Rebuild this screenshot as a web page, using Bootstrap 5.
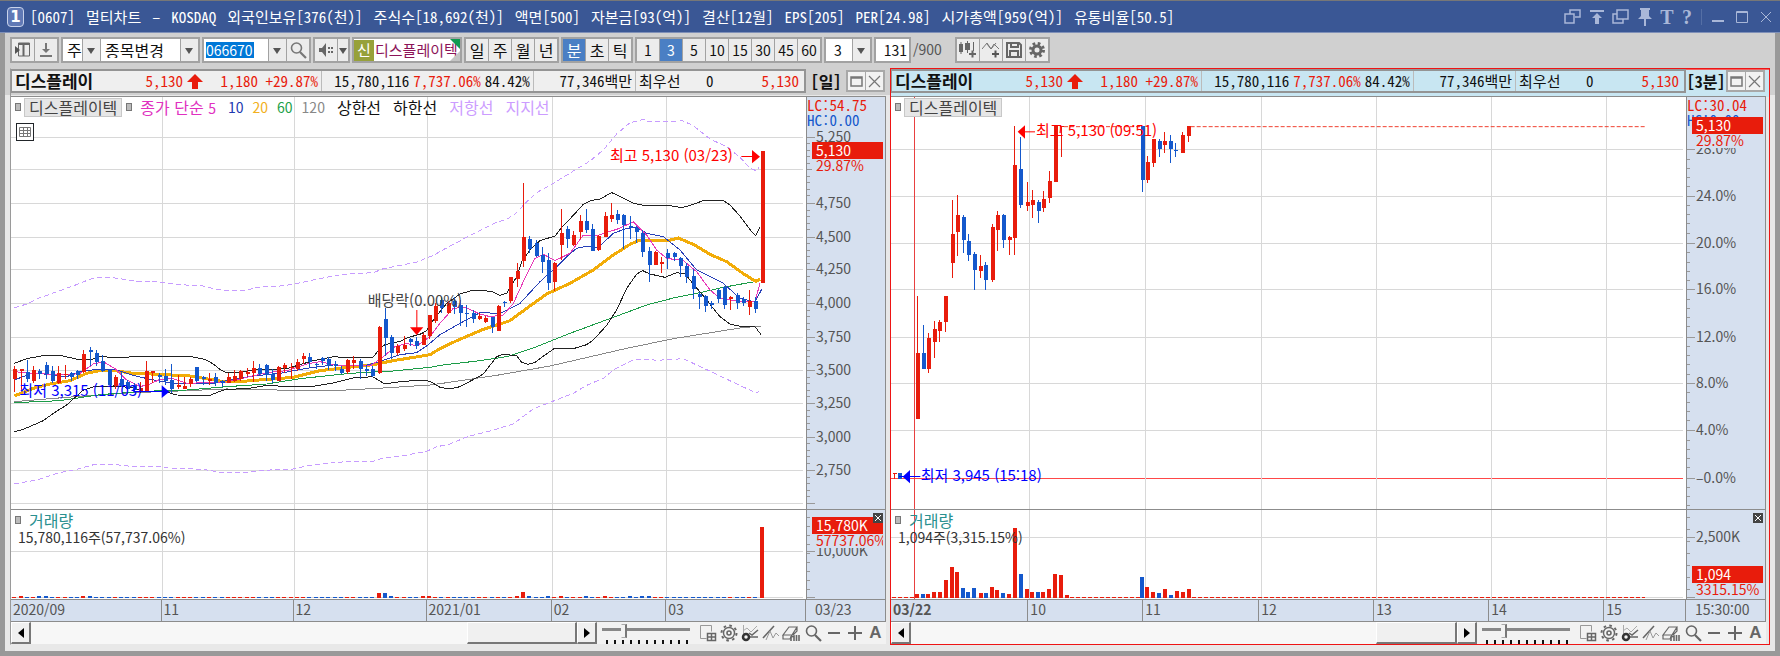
<!DOCTYPE html>
<html lang="ko">
<head>
<meta charset="utf-8">
<meta name="viewport" content="width=device-width, initial-scale=1">
<title>[0607] 멀티차트</title>
<link href="https://cdn.jsdelivr.net/npm/bootstrap@5.3.0/dist/css/bootstrap.min.css" rel="stylesheet">
<style>
:root{--up:#e81c0c;--down:#1458cc;--line:#8c8c8c;--axis:#d6e0ef;--face:#ececec;--axis-w:80px}
body{font-family:"Noto Sans CJK KR",sans-serif;font-size:16px;line-height:16px;color:#111;background:#d0d0d0;overflow:hidden}
button,input,select{font:inherit;color:inherit}
svg{display:block}
.up{color:var(--up)}
.down{color:var(--down)}
.half{font-size:15px;font-feature-settings:"hwid"}
.num{font-size:14px}

/* window frame */
.titlebar{height:33px;background:#3a5795;border-top:1px solid #777;border-bottom:1px solid #7f90b8;color:#fff;padding:0 2px 0 7px}
.win-no{width:17px;height:20px;border:1px solid #c8d2ea;border-radius:4px;background:#6079b5;font:bold 15px/18px "DejaVu Sans",sans-serif;text-align:center;margin-right:6px}
.facts{gap:11px}
.title-tools{color:#a9b7d8}
.title-tools button{background:none;border:0;padding:0;height:22px;width:24px;display:flex;align-items:center;justify-content:center}
.title-tools .glyph{font:bold 20px/20px "Liberation Serif",serif;width:20px}
.frame{border:5px solid #999;border-top:0;border-left-color:#989898}
.workspace{padding:0 5px 6px;background:linear-gradient(#d0d0d0 27px,#e8e8e8 27px)}

/* toolbar */
.tools{height:35px;padding:4px 5px 0;gap:2px}
.tgroup{display:flex;height:26px;border:2px solid #a2a2a2;background:#a2a2a2;gap:1px}
.tbtn{width:22px;border:0;padding:0;background:var(--face);display:flex;align-items:center;justify-content:center}
.tbtn.slim{width:10px;position:relative}
.tbtn.active{background:#4a7fc4;color:#fff}
.pick{position:relative;display:flex;background:#fff}
.pick select,.code{appearance:none;border:0;padding:0 18px 0 4px;width:100%;border-radius:0;background:#fff;outline:0}
.pick::before{content:"";position:absolute;right:0;top:0;bottom:0;width:18px;background:var(--face);border-left:1px solid #a2a2a2;pointer-events:none}
.pick::after,.tri{content:"";position:absolute;right:5px;top:9px;border:4px solid transparent;border-top:6px solid #555;border-bottom:0;pointer-events:none}
.tri{right:1px}
.pick-type{width:37px}.pick-mode{width:97px}.pick-code{width:82px}.pick-n{width:44px}
.pick .code{padding-left:2px;color:#fff;background:linear-gradient(#0078d7,#0078d7) 2px 3px/48px 16px no-repeat #fff}
.stock{width:106px;background:#fff;color:#8c1458;overflow:hidden;position:relative;white-space:nowrap;font-size:15px}
.stock b{background:#97a13a;color:#fff;font-weight:400;flex:none;width:20px;text-align:center;line-height:20px;height:21px;margin-right:1px}
.stock::before{content:"";position:absolute;right:0;top:0;border:5px solid #109a50;border-left-color:transparent;border-bottom-color:transparent}
.stock::after{content:"";position:absolute;right:0;bottom:0;border:5px solid #c4c4c4;border-left-color:transparent;border-top-color:transparent}
.count{width:37px;border:2px solid #a2a2a2;background:#fff;height:26px;padding:0 2px;text-align:right;border-radius:0}
.total{width:40px;color:#555;line-height:24px}

/* chart panels */
.pane{flex:1 1 0;min-width:0;border:1px solid transparent;border-left-color:#9a9a9a;padding-right:3px;display:flex;flex-direction:column}
.pane.current{border-color:#ee1414;box-shadow:inset 0 1px #f06060;background:linear-gradient(#c8e6f2 28px,#e8e8e8 28px)}
.quote{height:24px}
.cells{flex:1 1 auto;display:grid;grid-template-columns:minmax(0,312fr) minmax(0,213fr) minmax(0,103fr) minmax(0,169fr);border:2px solid #949494;border-left-width:1px;background:#efefef;white-space:nowrap}
.current .cells{background:#c8e6f2}
.cells>div{display:flex;align-items:center;border-right:1px solid #bbb;padding:0 3px;min-width:0}
.cells>div:last-child{border:0;padding-right:5px}
.pname{font-weight:700;font-size:17px}
.w-fig{width:60px;text-align:right}
.w-diff{width:55px;text-align:right}
.period{width:40px;font-weight:700;font-size:16px;text-align:center;white-space:nowrap}
.pbtns{display:flex;height:22px;border:2px solid #a8a8a8;background:#a8a8a8;gap:1px;margin-right:1px}
.pbtns button{width:17px;border:0;padding:0;background:#f2f2f2;display:flex;align-items:center;justify-content:center}
.charts{border-top:1px solid var(--line);margin-top:3px}
.band{display:flex;min-height:0;flex-basis:0;background:#fff}
.band.price{flex-grow:412;border-bottom:1px solid var(--line)}
.band.vol{flex-grow:89}
.plot{position:relative;flex:1 1 0;min-width:0;overflow:hidden}
.scale{position:relative;width:var(--axis-w);background:var(--axis);border-left:1px solid var(--line);border-right:1px solid var(--line);overflow:hidden;color:#555}
.fill{position:absolute;inset:0;width:100%;height:100%}
.legend-row{position:relative;display:flex;align-items:center;height:20px;padding-left:4px;white-space:nowrap}
.tag{background:#e6e6e6;border:1px solid #c8c8c8;padding:0 4px;height:19px;line-height:17px;color:#444;margin:0 4px 0 3px}
.sq{width:6px;height:8px;border:1px solid #777;background:#bbb;flex:none}
.avg{margin-left:9px}
.bound{margin-left:12px}
.grid-btn{position:absolute;left:5px;top:26px;width:18px;height:18px}
.note{position:absolute;white-space:nowrap;transform:translateY(-57%);font-size:15px}
.tick-label{position:absolute;left:9px;transform:translateY(-57%);white-space:nowrap;font-size:14px}
.limits{position:relative;background:var(--axis);line-height:15px;height:30px}
.now{position:absolute;left:5px;right:2px;font-size:14px}
.now b{display:block;font-weight:400;height:17px;line-height:16px;padding-left:4px;background:var(--up);color:#fff}
.now span{display:block;background:var(--axis);height:14px;line-height:13px;padding-left:4px;color:var(--up);white-space:nowrap;overflow:hidden}
.vol-text{color:#333;font-size:14px;line-height:14px;padding-left:7px}
.xbtn{position:absolute;right:2px;top:3px;width:10px;height:10px;background:#444;border:0;padding:0;color:#fff;display:flex;align-items:center;justify-content:center}
.dates{display:flex;height:23px;background:var(--axis);border:1px solid var(--line);border-left:0;color:#555;line-height:18px;font-size:14px}
.dates>span{flex-basis:0;min-width:0;padding-left:2px;border-right:1px solid var(--line)}
.dates>.last{flex:0 0 79px;padding-left:9px;border:0}

/* scroll row */
.scroller{height:22px;background:#f2f2f2}
.sbtn{width:20px;flex:none;background:#f0f0f0;border:1px solid #fff;border-right:2px solid #777;border-bottom:2px solid #777;padding:0;display:flex;align-items:center;justify-content:center}
.rail{flex:1 1 0;display:flex;background:#f7f7f7}
.grip{border:1px solid #fff;border-right:2px solid #777;border-bottom:2px solid #777;background:#f0f0f0}
.zoomer{width:88px;margin:0 7px 0 5px;position:relative;display:flex;align-items:flex-start;background:repeating-linear-gradient(90deg,#111 0 2px,transparent 2px 8px) 4px 100%/82px 4px no-repeat}
.zoomer input{appearance:none;width:100%;height:14px;margin:2px 0;background:linear-gradient(#888,#888) 0 4px/100% 3px no-repeat}
.zoomer input::-webkit-slider-thumb{appearance:none;width:6px;height:14px;background:#f2f2f2;border:1px solid #aaa;border-right:2px solid #777;border-left-color:#f2f2f2}
.minis button{width:21px;height:20px;border:0;padding:0;background:none;color:#666;display:flex;align-items:center;justify-content:center}
.minis .ltr{font:bold 17px/18px "Liberation Sans",sans-serif}
</style>
</head>
<body class="vh-100 d-flex flex-column m-0">

<svg width="0" height="0" class="position-absolute" aria-hidden="true">
  <defs>
    <g id="i-gear" fill="none" stroke="currentColor"><circle cx="9" cy="9" r="4" stroke-width="3"/><circle cx="9" cy="9" r="6.5" stroke-width="3" stroke-dasharray="2.6 2.5"/></g>
    <g id="i-gear2" fill="none" stroke="currentColor"><circle cx="9" cy="9" r="5.5" stroke-width="1.4"/><circle cx="9" cy="9" r="7.5" stroke-width="2" stroke-dasharray="2.6 3.3"/><circle cx="9" cy="9" r="2" stroke-width="1.6"/></g>
    <g id="i-lens" fill="none" stroke="currentColor"><circle cx="7.5" cy="7" r="5" stroke-width="1.6"/><path d="M11 11l6 6" stroke-width="2.2"/></g>
    <g id="i-new" fill="none" stroke="currentColor"><path d="M7.500 14.500h-6v-13h11v6" stroke="#999"/><path d="M8.500 9.500h8v7h-8zM12.500 9.500v7M8.500 13h8" stroke-width="1.500"/></g>
    <g id="i-ind" fill="none" stroke="currentColor"><path d="M2.500 1v9M2 7l4-3 4 4 6-6" stroke="#aaa"/><path d="M8 13h9M8 9l3 2 6-5" stroke-width="1.500"/><circle cx="5" cy="13" r="3" stroke="#333" stroke-width="2.500"/></g>
    <g id="i-draw" fill="none" stroke="currentColor"><path d="M1 14L12 2" stroke-width="1.600"/><path d="M4 16l4-9 3 7 3-5 3 3" stroke="#999"/></g>
    <g id="i-erase" fill="none" stroke="currentColor"><path d="M1 11l6-8h8l-5 8zM1 11v4h7l2-4M15 3v4l-4 4" stroke-width="1.200"/><path d="M9 17v-4l3-1v5M14.500 11v6M17 11v6" stroke-width="1.600"/></g>
  </defs>
</svg>

<header class="titlebar d-flex align-items-center flex-shrink-0">
  <span class="win-no">1</span>
  <div class="facts half d-flex text-nowrap flex-grow-1">
    <span>[0607]</span><span>멀티차트</span><span>–</span><span>KOSDAQ</span><span>외국인보유[376(천)]</span><span>주식수[18,692(천)]</span><span>액면[500]</span><span>자본금[93(억)]</span><span>결산[12월]</span><span>EPS[205]</span><span>PER[24.98]</span><span>시가총액[959(억)]</span><span>유통비율[50.5]</span>
  </div>
  <div class="title-tools d-flex align-items-center">
    <button aria-label="창 복제"><svg width="18" height="16" fill="none" stroke="currentColor" stroke-width="1.500"><path d="M6 5V1h10v7h-5M1 5h9v9H1z"/></svg></button>
    <button aria-label="위로"><svg width="16" height="16" fill="currentColor"><path d="M1 1h14v2H1zM8 4l5 5h-3v6H6V9H3z"/></svg></button>
    <button aria-label="겹치기"><svg width="18" height="16" fill="none" stroke="currentColor" stroke-width="1.500"><path d="M5 1h11v9H5zM5 5H1v9h10v-4"/></svg></button>
    <button aria-label="고정"><svg width="14" height="18" fill="currentColor"><path d="M2 0h10v2h-1v6l3 3H0l3-3V2H2zM6 11h2v7H6z"/></svg></button>
    <button class="glyph" aria-label="글꼴">T</button>
    <button class="glyph" aria-label="도움말">?</button>
    <span class="vr mx-1 my-1"></span>
    <button aria-label="최소화"><svg width="14" height="12"><path d="M1 9h12v2H1z" fill="currentColor"/></svg></button>
    <button aria-label="최대화"><svg width="14" height="14" fill="none" stroke="currentColor"><path d="M1.500 1.500h11v11h-11zM1 2.500h12"/></svg></button>
    <button aria-label="닫기"><svg width="12" height="12" stroke="currentColor"><path d="M1 1l10 10M11 1L1 11"/></svg></button>
  </div>
</header>

<main class="frame d-flex flex-column flex-grow-1" style="min-height:0">
  <div class="tools d-flex flex-shrink-0 text-nowrap">
    <div class="tgroup">
      <button class="tbtn" aria-label="목록"><svg width="16" height="18" fill="none" stroke="#666"><path d="M3.500 2v13h11V2z" /><path d="M3 3h12M8.500 3v12" stroke-width="2"/><path d="M0 5l5 4-5 4z" fill="#555" stroke="none"/></svg></button>
      <button class="tbtn" aria-label="내려받기"><svg width="14" height="18" fill="#777"><path d="M6 2h2v6h3l-4 4-4-4h3zM1 14h12v2H1z"/></svg></button>
    </div>
    <div class="tgroup">
      <label class="pick pick-type"><select aria-label="종류"><option>주</option></select></label>
      <label class="pick pick-mode"><select aria-label="변경"><option>종목변경</option></select></label>
    </div>
    <div class="tgroup">
      <label class="pick pick-code"><input class="code num" value="066670" aria-label="종목코드"></label>
      <button class="tbtn" aria-label="검색"><svg width="18" height="18" color="#777"><use href="#i-lens"/></svg></button>
    </div>
    <div class="tgroup">
      <button class="tbtn" aria-label="소리"><svg width="16" height="16" fill="#666"><path d="M1 6h3l4-5v14l-4-5H1zM10 5h2v2h-2zM13 5h2v2h-2zM10 9h2v2h-2zM13 9h2v2h-2z"/></svg></button>
      <button class="tbtn slim" aria-label="소리 설정"><span class="tri"></span></button>
    </div>
    <div class="tgroup"><div class="stock d-flex align-items-center"><b>신</b><span>디스플레이텍</span></div></div>
    <div class="tgroup">
      <button class="tbtn">일</button><button class="tbtn">주</button><button class="tbtn">월</button><button class="tbtn">년</button>
    </div>
    <div class="tgroup">
      <button class="tbtn active">분</button><button class="tbtn">초</button><button class="tbtn">틱</button>
    </div>
    <div class="tgroup num">
      <button class="tbtn">1</button><button class="tbtn active">3</button><button class="tbtn">5</button><button class="tbtn">10</button><button class="tbtn">15</button><button class="tbtn">30</button><button class="tbtn">45</button><button class="tbtn">60</button>
    </div>
    <div class="tgroup num"><label class="pick pick-n"><select class="ps-2" aria-label="간격"><option>3</option></select></label></div>
    <input class="count num" value="131" aria-label="봉 개수"><span class="total num">/900</span>
    <div class="tgroup">
      <button class="tbtn" aria-label="봉 추가"><svg width="18" height="18" fill="#666"><path d="M0 3h4v8H0zM1.500 1h1v12h-1zM6 2h5v7H6zM8 0h1v12H8zM14 1h1v9h-1zM10 12h7v2h-7zM12.500 9.500h2v7h-2z"/></svg></button>
      <button class="tbtn" aria-label="지표 추가"><svg width="18" height="18" fill="none" stroke="#777"><path d="M0 8l5-6 4 6 5-6M5 3l4 5 3-5 5 5" /><path d="M10 13h7M13.500 9.500v7" stroke-width="2" stroke="#555"/></svg></button>
      <button class="tbtn" aria-label="저장"><svg width="18" height="18" fill="none" stroke="#666" stroke-width="2"><path d="M2 2h12l2 2v12H2zM6 2v4h7V2M5 16v-6h8v6"/></svg></button>
      <button class="tbtn" aria-label="설정"><svg width="18" height="18" color="#666"><use href="#i-gear"/></svg></button>
    </div>
  </div>

  <div class="workspace d-flex flex-grow-1" style="min-height:0" id="workspace"></div>
</main>

<template id="pane-tpl">
  <section class="pane">
    <div class="quote d-flex align-items-center flex-shrink-0">
      <div class="cells half h-100">
        <div><span class="pname flex-grow-1">디스플레이</span><span class="up">5,130</span><svg class="ms-1" width="16" height="16" fill="#e81c0c"><path d="M8 1l8 8h-5v7H5V9H0z"/></svg><span class="up w-diff">1,180</span><span class="up w-fig">+29.87%</span></div>
        <div class="justify-content-end"><span>15,780,116</span><span class="up mx-1">7,737.06%</span><span>84.42%</span></div>
        <div class="justify-content-end">77,346백만</div>
        <div class="justify-content-between"><span>최우선</span><span>0</span><span class="up w-fig">5,130</span></div>
      </div>
      <span class="period half"></span>
      <div class="pbtns"><button aria-label="최대화"><svg width="13" height="13" fill="none" stroke="#777" stroke-width="1.500"><path d="M1 2h11v9H1zM1 3h11"/></svg></button><button aria-label="닫기"><svg width="13" height="13" stroke="#777" stroke-width="1.200"><path d="M1 1l11 11M12 1L1 12"/></svg></button></div>
    </div>
    <div class="charts d-flex flex-column flex-grow-1" style="min-height:0">
      <div class="band price">
        <div class="plot"><svg class="fill" viewBox="33 21 2385 1236" preserveAspectRatio="none"></svg><div class="legend-row"></div></div>
        <div class="scale"><svg class="fill" viewBox="0 21 240 1236" preserveAspectRatio="none"></svg></div>
      </div>
      <div class="band vol">
        <div class="plot"><svg class="fill" viewBox="11 510 795 89" preserveAspectRatio="none"></svg>
          <div class="legend-row"><span class="sq"></span><span class="ms-2" style="color:#2a9090">거래량</span></div><div class="position-relative vol-text"></div></div>
        <div class="scale"><svg class="fill" viewBox="0 510 80 89" preserveAspectRatio="none"></svg><button class="xbtn" aria-label="지표 닫기"><svg width="6" height="6" stroke="#fff"><path d="M0 0l6 6M6 0L0 6"/></svg></button></div>
      </div>
      <div class="dates flex-shrink-0"></div>
    </div>
    <div class="scroller d-flex flex-shrink-0">
      <button class="sbtn" aria-label="왼쪽"><svg width="6" height="10"><path d="M6 0v10L0 5z"/></svg></button>
      <div class="rail"><div class="spacer"></div><div class="grip"></div></div>
      <button class="sbtn" aria-label="오른쪽"><svg width="6" height="10"><path d="M0 0v10l6-5z"/></svg></button>
      <div class="zoomer"><input type="range" min="0" max="10" value="2.3" step="0.1" aria-label="확대"></div>
      <div class="minis d-flex align-items-center">
        <button aria-label="창 추가"><svg width="18" height="18"><use href="#i-new"/></svg></button>
        <button aria-label="환경"><svg width="18" height="18"><use href="#i-gear2"/></svg></button>
        <button aria-label="지표"><svg width="18" height="18"><use href="#i-ind"/></svg></button>
        <button aria-label="추세선"><svg width="18" height="18"><use href="#i-draw"/></svg></button>
        <button aria-label="모두 지우기"><svg width="19" height="18"><use href="#i-erase"/></svg></button>
        <button aria-label="돋보기"><svg width="18" height="18"><use href="#i-lens"/></svg></button>
        <button aria-label="축소"><svg width="12" height="12"><path d="M0 5h12v2H0z" fill="currentColor"/></svg></button>
        <button aria-label="확대"><svg width="14" height="14"><path d="M0 6h14v2H0zM6 0h2v14H6z" fill="currentColor"/></svg></button>
        <button class="ltr" aria-label="자동">A</button>
      </div>
    </div>
  </section>
</template>

<script src="https://cdn.jsdelivr.net/npm/bootstrap@5.3.0/dist/js/bootstrap.bundle.min.js"></script>
<script>
const UP = '#e81c0c', DOWN = '#1458cc', GRID = '#d8d8d8';

/* daily candles: direction, high, body top, body bottom, low */
const daily = `R828,836,868,906 R836,838,842,900 B810,846,868,876 R828,840,872,880 B838,842,852,866 B816,824,852,868 B828,842,872,878 R828,850,880,882 R825,852,856,868 B846,848,862,872
B840,843,856,868 R780,792,846,850 B772,780,786,828 B780,790,816,828 B796,812,842,845 B838,840,884,886 R856,862,888,896 B846,866,888,890 B870,876,896,900 B880,885,900,904
R876,895,905,908 R813,843,905,906 R842,844,850,880 B850,855,860,878 B838,858,874,884 B822,870,898,908 R856,886,892,898 R860,888,896,898 R860,866,882,892 B832,832,872,876
B858,860,868,884 R850,866,874,884 B850,862,880,888 B870,874,878,890 R848,862,878,880 R840,858,872,876 R840,844,868,872 R835,846,852,858 R814,834,848,876 B822,834,852,855
B822,824,856,872 B836,852,870,880 R828,830,872,874 R820,824,834,850 R820,830,834,868 R808,816,838,842 R790,798,808,822 B790,802,816,832 B818,822,826,838 B800,804,814,826
B800,806,828,840 B812,822,828,842 B828,836,850,852 R806,810,846,852 R798,810,820,838 B808,812,838,868 B824,838,844,858 B828,838,858,860 R708,710,850,853 B653,686,744,798
B736,742,790,808 R762,768,790,794 R738,766,778,784 B745,748,756,768 B742,754,768,776 R730,736,764,766 R674,676,738,748 R640,648,692,700 B622,630,654,670 R632,640,668,672
B620,632,652,672 B630,646,668,708 B646,668,672,712 B660,668,686,698 R670,678,686,690 R678,684,696,700 B680,682,712,730 R646,648,722,724 B632,635,640,652 R560,562,632,640
R518,543,566,590 R278,442,514,530 B438,446,476,488 B450,460,498,500 B470,496,516,550 B490,510,580,600 R515,520,576,604 R356,430,464,510 B408,418,448,474 R424,434,464,468
R374,394,426,448 B356,394,420,430 B402,416,482,484 R434,438,480,484 R366,378,440,440 R340,375,386,396 B360,372,390,402 B372,375,404,476 B378,408,414,448 B408,414,426,458
B420,428,486,500 B470,482,524,576 R484,486,524,526 R500,516,522,550 B476,490,504,538 B486,488,500,512 B502,504,528,560 B520,528,562,578 B536,558,596,626 B606,612,620,656
B616,618,648,666 B634,638,644,658 B598,600,626,640 B588,592,644,656 R618,620,626,660 B610,614,640,658 B620,626,638,648 R600,634,652,674 B622,632,658,668 R183,183,580,580`
  .split(/\s+/).map((s, i) => [s[0], 43 + 18.84 * i, ...s.slice(1).split(',').map(Number)]);

/* three-minute candles: direction, x, high, body top, body bottom, low */
const intraday = `R43,1150,1150,1153,1166 B57,1150,1150,1168,1168 R110,618,790,986,986 B129,704,790,838,838 R144,730,745,838,850 R163,693,716,756,805 R178,690,697,722,756 R196,618,618,696,727 R215,330,431,520,565 R230,315,375,427,498
B249,376,381,449,490 B264,431,453,494,513 B283,487,491,539,599 R301,494,528,542,565 B316,517,524,569,599 R335,401,411,569,576 R350,364,375,419,484 B369,372,375,449,475 R388,438,442,449,494 R403,108,225,445,494
B421,140,236,344,355 R440,277,337,347,362 R455,300,330,344,385 B474,330,337,362,400 R489,304,326,355,366 R508,243,273,325,340 R526,108,108,277,277 R542,108,108,112,202 B785,108,108,269,306 R800,199,217,269,280
R819,146,147,220,231 B838,147,154,176,202 R853,127,154,164,190 B871,135,154,176,220 B886,160,180,184,202 R905,127,135,190,190 R923,108,108,138,157`
  .split(/\s+/).map(s => [s[0], ...s.slice(1).split(',').map(Number)]);

const curves = [
  ['#c79cff', 1, '43,654 80,642 118,624 180,602 240,580 268,568 290,563 345,564 420,575 480,576 540,584 610,588 640,596 680,601 735,601 780,591 840,588 880,583 920,574 990,560 1050,552 1120,548 1150,536 1250,516 1300,496 1350,468 1370,458 1420,431 1490,397 1520,388 1550,368 1580,335 1610,308 1660,280 1720,243 1770,213 1810,180 1850,132 1890,98 1930,88 1945,95 2035,95 2045,91 2080,107 2130,147 2180,170 2220,202 2250,234 2268,242 2277,232', '5 3'],
  ['#c79cff', 1, '43,1182 110,1170 170,1150 230,1138 285,1123 340,1123 400,1130 480,1130 510,1135 610,1138 660,1147 735,1148 780,1141 875,1138 920,1128 1000,1118 1050,1114 1120,1114 1150,1104 1220,1095 1280,1084 1310,1070 1345,1064 1400,1041 1470,1023 1540,1002 1600,957 1650,937 1720,910 1760,886 1810,865 1840,840 1905,807 1940,807 1970,811 2050,806 2090,825 2150,853 2210,882 2270,909 2277,904', '5 3'],
  ['#888888', 1, '43,935 200,922 400,908 560,902 680,897 800,898 860,902 1020,901 1150,894 1290,885 1320,881 1490,856 1650,828 1750,805 1880,775 2020,746 2220,714 2283,708'],
  ['#1c9c48', 1, '43,938 180,932 300,914 430,904 560,900 680,890 800,882 900,866 1050,850 1180,843 1290,832 1320,826 1440,812 1520,800 1610,770 1710,730 1840,682 1940,645 2020,624 2100,608 2170,592 2230,581 2280,572'],
  ['#f2ac08', 3, '43,918 100,895 150,882 210,872 260,850 300,842 350,843 400,850 480,853 570,858 660,873 740,873 880,862 960,842 1060,830 1120,824 1180,812 1290,794 1320,776 1370,752 1450,718 1530,692 1580,655 1640,612 1710,580 1780,540 1840,495 1890,463 1920,450 2000,453 2035,444 2080,463 2130,493 2180,515 2230,551 2267,574 2280,568'],
  ['#2840b8', 1, '43,870 100,848 200,860 250,842 300,838 350,840 400,856 450,868 510,878 560,882 640,880 700,868 760,858 840,850 920,835 1000,825 1090,828 1130,818 1200,794 1250,788 1285,764 1320,734 1380,700 1440,668 1500,670 1560,640 1620,575 1670,530 1700,500 1730,475 1760,469 1795,472 1840,430 1880,415 1910,412 1940,430 1990,440 2040,480 2090,540 2170,580 2220,625 2265,636 2285,598'],
  ['#e838b8', 1, '43,845 100,850 200,855 240,850 280,822 310,815 345,836 380,870 420,890 450,882 480,868 520,866 560,880 620,878 680,876 740,862 800,848 860,842 920,822 960,815 1000,824 1060,828 1115,825 1150,800 1185,770 1220,760 1250,768 1290,740 1320,700 1360,655 1395,652 1440,672 1470,680 1510,675 1540,640 1570,575 1605,505 1630,493 1665,512 1710,490 1750,435 1790,437 1850,418 1900,396 1940,435 1970,480 2000,505 2050,512 2090,545 2130,600 2160,625 2220,635 2265,634 2280,580'],
  ['#222222', 1, '43,820 80,806 135,796 185,797 240,810 280,807 300,800 360,803 400,800 580,801 615,808 640,822 662,840 680,848 720,847 760,840 860,836 900,824 940,812 1000,800 1060,804 1118,803 1140,776 1155,764 1200,754 1225,742 1260,733 1280,722 1300,690 1320,665 1340,640 1380,612 1410,603 1440,600 1480,606 1500,616 1520,610 1535,585 1550,560 1565,515 1590,480 1620,452 1665,438 1685,412 1720,376 1750,343 1775,331 1800,327 1835,308 1860,319 1900,340 1930,346 2010,347 2045,353 2065,348 2110,332 2170,332 2190,345 2220,378 2255,425 2267,437 2280,412'],
  ['#222222', 1, '43,1025 70,1018 130,992 160,970 200,945 230,918 250,900 280,891 340,888 400,893 430,905 500,906 530,915 630,916 660,904 680,898 740,896 800,886 850,889 940,889 1000,879 1060,864 1118,860 1155,882 1200,875 1270,870 1290,874 1320,892 1350,897 1380,890 1410,874 1450,852 1470,826 1490,800 1510,793 1550,797 1565,817 1585,823 1605,817 1635,795 1665,774 1720,776 1760,764 1780,750 1820,706 1850,660 1880,595 1910,552 1928,542 1950,552 1995,562 2030,548 2055,552 2085,588 2120,630 2160,680 2190,702 2220,709 2265,710 2283,734']
];

const dailyVol = {1:2,4:2,5:2,11:2,12:2,58:5,59:5,60:2,65:2,66:2,80:2,81:6,82:2,85:2,87:2,91:2,94:2,98:2,100:2,101:2,119:71};
/* minute volume: direction, x, height */
const minuteVol = 'R37,4 B43,4 R48,4 R54,6 R60,6 R66,18 R72,31 R77,26 B83,10 B88,6 B94,10 R101,5 B106,5 R112,11 R117,8 B123,5 R129,4 R135,70 B141,24 R147,9 R152,6 B158,6 R163,6 R169,9 R175,24 R181,23 R187,3 B262,21 R267,11 R273,6 B279,5 R285,9 B291,3 R297,7 R303,6 R309,9'
  .split(' ').map(s => [s[0], ...s.slice(1).split(',').map(Number)]);

const snap = v => Math.round(v / 3) * 3;
const rect = (x, y, w, h, f) => `<rect x="${x}" y="${y}" width="${w}" height="${h}" fill="${f}"/>`;
const candle = ([d, x, hi, top, bot, lo]) => {
  const c = d === 'R' ? UP : DOWN, X = snap(x);
  return rect(X, snap(hi), 3, Math.max(3, snap(lo) - snap(hi)), c) + rect(X - 3, snap(top), 12, Math.max(3, snap(bot) - snap(top)), c);
};
const tri = (pts, c) => `<polygon points="${pts}" fill="${c}"/>`;
const place = (sel, text, xPct, yPct, color, host) => {
  const s = document.createElement('span');
  s.className = sel; s.textContent = text; s.style.top = yPct + '%';
  if (xPct !== null) s.style.left = xPct + '%';
  if (color) s.style.color = color;
  host.append(s);
};

function build(o) {
  const pane = document.getElementById('pane-tpl').content.cloneNode(true).firstElementChild;
  const q = s => pane.querySelector(s), px = (v) => (v - 21) / 12.36, vx = v => (v - 510) / .89;
  if (o.current) pane.classList.add('current');
  q('.period').textContent = o.period;
  q('.price .legend-row').innerHTML = '<span class="sq"></span><span class="tag">디스플레이텍</span>' + (o.legend || '');

  let g = '<g shape-rendering="crispEdges">';
  o.rows.forEach(([y, t]) => g += rect(33, snap(y), 2376, 3, t === '–0.0%' ? '#ff4848' : GRID));
  o.cols.forEach(x => g += rect(snap(x), 21, 3, 1236, GRID));
  if (o.open) g += rect(o.open, 21, 3, 1236, '#e84040');
  (o.curves || []).forEach(([c, w, p, dash]) => g += `<polyline points="${p}" fill="none" stroke="${c}" stroke-width="${w}" ${dash ? `stroke-dasharray="${dash}"` : ''} vector-effect="non-scaling-stroke"/>`);
  g += o.candles.map(candle).join('') + '</g>' + o.marks;
  q('.price .plot svg').innerHTML = g;
  o.notes.forEach(([t, x, y, c]) => place('note', t, (x - 33) / 23.85, px(y), c, q('.price .plot')));

  let a = '<g shape-rendering="crispEdges">';
  const step = o.rows[1][0] - o.rows[0][0];
  o.rows.forEach(([y, t]) => {
    a += rect(0, snap(y), 24, 3, '#999');
    for (let k = 1; k < 5; k++) a += rect(0, snap(y + k * step / 5), 9, 3, '#999');
    if (t) place('tick-label', t, null, px(y), '', q('.price .scale'));
  });
  q('.price .scale svg').innerHTML = a + '</g>';
  q('.price .scale').insertAdjacentHTML('beforeend', `<div class="limits half"><div class="up">${o.lc}</div><div class="down">HC:0.00</div></div><div class="now" style="top:${px(o.nowY)}%"><b>5,130</b><span>29.87%</span></div>`);

  let v = '<g shape-rendering="crispEdges">' + rect(11, o.volRow, 792, 1, GRID) + rect(11, 597, 792, 1, GRID);
  o.cols.forEach(x => v += rect(snap(x) / 3, 510, 1, 89, GRID));
  if (o.open) v += rect(o.open / 3, 510, 1, 89, '#e84040');
  q('.vol .plot svg').innerHTML = v + o.volume + '</g>';
  let t = '<g shape-rendering="crispEdges">' + rect(0, o.volRow, 8, 1, '#999') + rect(0, 597, 8, 1, '#999');
  for (let y = 517; y < 597; y += o.volStep) t += rect(0, y, 3, 1, '#999');
  q('.vol .scale svg').innerHTML = t + '</g>';
  place('tick-label', o.volLabel, null, vx(o.volRow), '', q('.vol .scale'));
  q('.vol .scale').insertAdjacentHTML('beforeend', `<div class="now" style="top:${vx(o.volNowY)}%"><b>${o.volNow}</b><span>${o.volPct}</span></div>`);
  q('.vol .scale').append(q('.xbtn'));
  q('.vol-text').textContent = o.volText;

  q('.dates').innerHTML = o.dates.map(([d, w]) => `<span style="flex-grow:${w}">${d}</span>`).join('') + `<span class="last">${o.end}</span>`;
  q('.spacer').style.flexGrow = o.scroll[0];
  q('.grip').style.flexGrow = o.scroll[1];
  document.getElementById('workspace').append(pane);
}

const BLUE = '#0000ff', RED = '#ff0000';
build({
  period: '[일]', lc: 'LC:54.75', nowY: 156,
  legend: '<span class="sq"></span><span class="ms-2" style="color:#e030c0">종가 단순 <span class="num">5</span></span><span class="num bound" style="color:#2038b0">10</span><span class="num avg" style="color:#f2b020">20</span><span class="num avg" style="color:#20a048">60</span><span class="num avg" style="color:#888">120</span><span class="bound">상한선</span><span class="bound">하한선</span><span class="bound" style="color:#cc9cff">저항선</span><span class="bound" style="color:#cc9cff">지지선</span><button class="grid-btn p-0 border border-dark bg-white" aria-label="표"><svg width="16" height="16" fill="none" stroke="#777"><path d="M2.500 3.500h11v9h-11zM2.500 6.500h11M2.500 9.500h11M6.500 3.500v9M10.500 3.500v9"/></svg></button>',
  rows: [[140, '5,250'], [238, ''], [339, '4,750'], [440, '4,500'], [538, '4,250'], [639, '4,000'], [740, '3,750'], [841, '3,500'], [939, '3,250'], [1040, '3,000'], [1141, '2,750'], [1239, '']],
  cols: [486, 883, 1281, 1656, 1997],
  curves, candles: daily,
  marks: rect(400, 903, 88, 3, BLUE) + tri('485,886 485,924 508,905', BLUE) + rect(2224, 198, 34, 3, RED) + tri('2256,180 2256,220 2280,200', RED) + rect(1249, 660, 3, 54, RED) + tri('1230,712 1270,712 1250,735', RED),
  notes: [['최저 3,315 (11/03)', 58, 903, BLUE], ['배당락(0.00%)', 1103, 632, '#444'], ['최고 5,130 (03/23)', 1830, 197, RED]],
  volRow: 551, volStep: 9, volLabel: '10,000K', volNowY: 517, volNow: '15,780K', volPct: '57737.06%', volText: '15,780,116주(57,737.06%)',
  volume: daily.map(([d, x], i) => { const h = dailyVol[i] || 1; return rect(Math.round(x / 3) - 2, 598 - h, 4, h, d === 'R' ? UP : DOWN); }).join(''),
  dates: [['2020/09', 151], ['11', 132], ['12', 133], ['2021/01', 125], ['02', 114], ['03', 140]], end: '03/23',
  scroll: [438, 107]
});
build({
  current: true, period: '[3분]', lc: 'LC:30.04', nowY: 82,
  rows: [[178, '28.0%'], [317, '24.0%'], [459, '20.0%'], [598, '16.0%'], [740, '12.0%'], [879, '8.0%'], [1021, '4.0%'], [1163, '–0.0%']],
  cols: [448, 794, 1142, 1487, 1832, 2177], open: 102,
  candles: intraday,
  marks: rect(57, 1158, 64, 3, BLUE) + tri('68,1160 90,1140 90,1180', BLUE) + rect(430, 124, 35, 3, RED) + tri('413,125 435,106 435,146', RED)
    + '<path d="M552 110H782M932 110H2295" stroke="#f04030" stroke-width="1" stroke-dasharray="4 2" vector-effect="non-scaling-stroke"/>',
  notes: [['최고 5,130 (09:51)', 468, 122, RED], ['최저 3,945 (15:18)', 122, 1157, BLUE]],
  volRow: 537, volStep: 12, volLabel: '2,500K', volNowY: 566, volNow: '1,094', volPct: '3315.15%', volText: '1,094주(3,315.15%)',
  volume: minuteVol.map(([d, x, h]) => rect(x - 2, 598 - h, 4, h, d === 'R' ? UP : DOWN)).join('') + '<path d="M12 597.500H34M190 597.500H260M312 597.500H765" stroke="#e81c0c" stroke-width="1" stroke-dasharray="4 2" vector-effect="non-scaling-stroke"/>',
  dates: [['<b>03/22</b>', 138], ['10', 115], ['11', 116], ['12', 115], ['13', 115], ['14', 115], ['15', 81]], end: '15:30:00',
  scroll: [466, 78]
});
</script>
</body>
</html>
